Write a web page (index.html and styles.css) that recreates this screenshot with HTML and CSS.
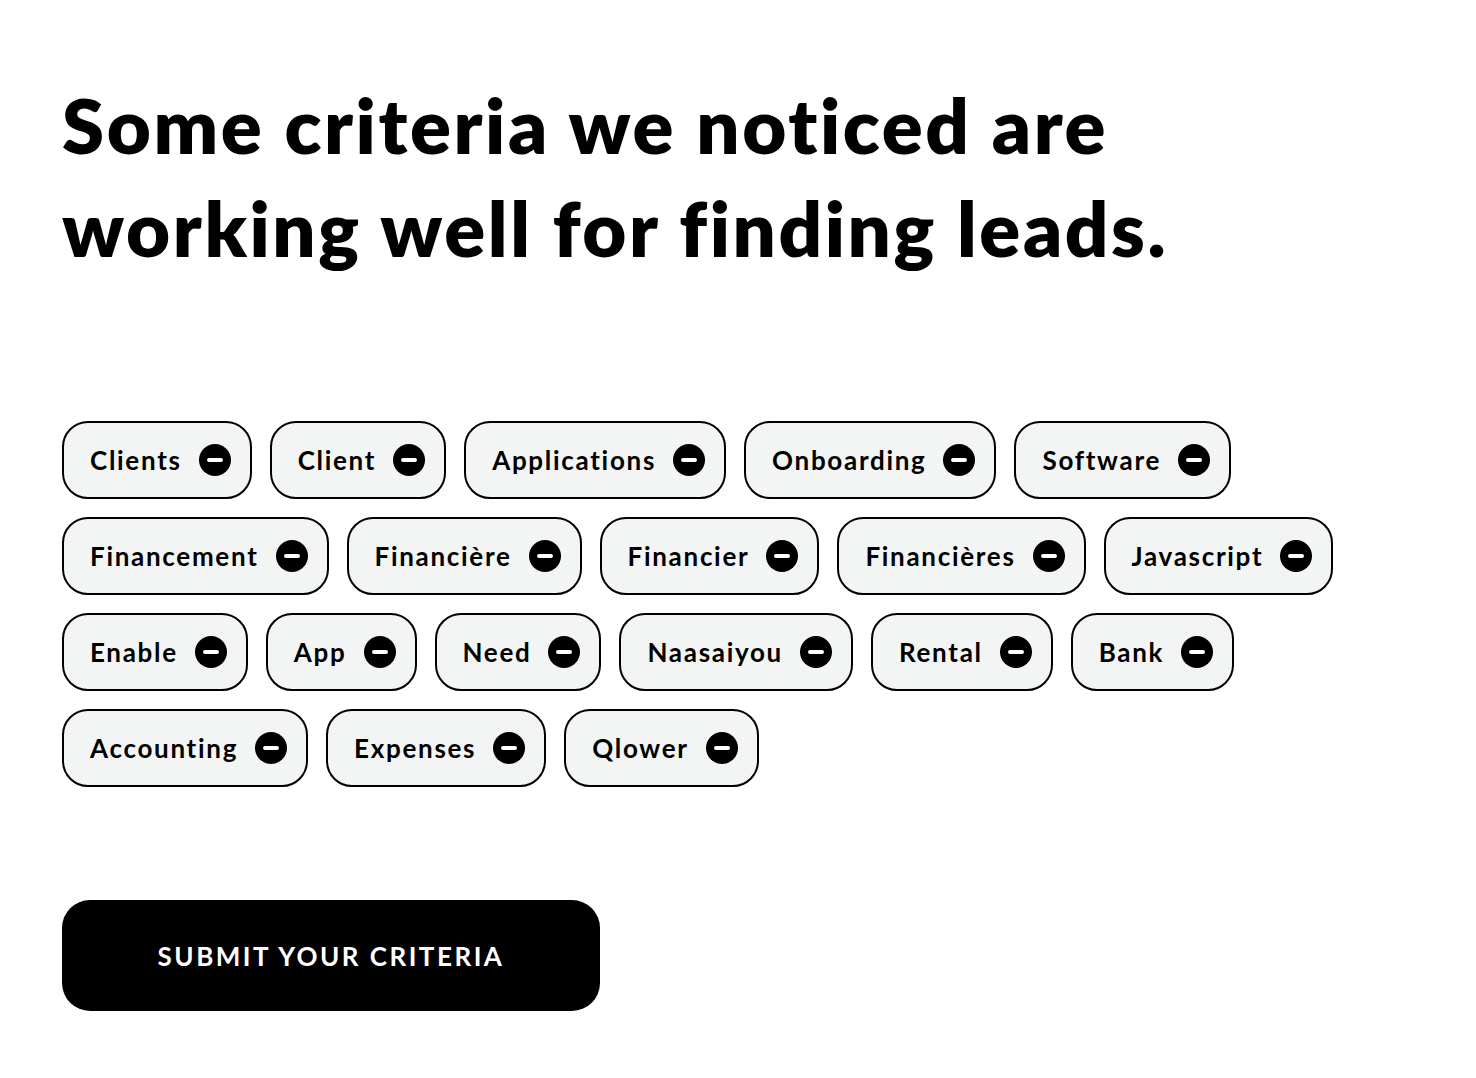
FILE: index.html
```html
<!DOCTYPE html>
<html lang="en">
<head>
<meta charset="utf-8">
<title>Criteria</title>
<link rel="stylesheet" href="styles.css">
</head>
<body>
<main class="page">
  <h1 class="title">Some criteria we noticed are<br>working well for finding leads.</h1>
  <div class="chips">
    <ul class="chip-row">
      <li class="chip"><span class="chip-label">Clients</span><span class="chip-remove"></span></li>
      <li class="chip"><span class="chip-label">Client</span><span class="chip-remove"></span></li>
      <li class="chip"><span class="chip-label">Applications</span><span class="chip-remove"></span></li>
      <li class="chip"><span class="chip-label">Onboarding</span><span class="chip-remove"></span></li>
      <li class="chip"><span class="chip-label">Software</span><span class="chip-remove"></span></li>
    </ul>
    <ul class="chip-row">
      <li class="chip"><span class="chip-label">Financement</span><span class="chip-remove"></span></li>
      <li class="chip"><span class="chip-label">Financière</span><span class="chip-remove"></span></li>
      <li class="chip"><span class="chip-label">Financier</span><span class="chip-remove"></span></li>
      <li class="chip"><span class="chip-label">Financières</span><span class="chip-remove"></span></li>
      <li class="chip"><span class="chip-label">Javascript</span><span class="chip-remove"></span></li>
    </ul>
    <ul class="chip-row">
      <li class="chip"><span class="chip-label">Enable</span><span class="chip-remove"></span></li>
      <li class="chip"><span class="chip-label">App</span><span class="chip-remove"></span></li>
      <li class="chip"><span class="chip-label">Need</span><span class="chip-remove"></span></li>
      <li class="chip"><span class="chip-label">Naasaiyou</span><span class="chip-remove"></span></li>
      <li class="chip"><span class="chip-label">Rental</span><span class="chip-remove"></span></li>
      <li class="chip"><span class="chip-label">Bank</span><span class="chip-remove"></span></li>
    </ul>
    <ul class="chip-row">
      <li class="chip"><span class="chip-label">Accounting</span><span class="chip-remove"></span></li>
      <li class="chip"><span class="chip-label">Expenses</span><span class="chip-remove"></span></li>
      <li class="chip"><span class="chip-label">Qlower</span><span class="chip-remove"></span></li>
    </ul>
  </div>
  <button class="submit" type="button">SUBMIT YOUR CRITERIA</button>
</main>
</body>
</html>
```

FILE: styles.css
```css
* { box-sizing: border-box; }
html, body { margin: 0; padding: 0; background: #fff; }
body { font-family: "Lato", "Liberation Sans", sans-serif; color: #000; }
.page { padding: 73px 62px 0; }
.title {
  margin: 0;
  font-size: 76px;
  line-height: 103px;
  font-weight: 800;
  letter-spacing: 2.6px;
}
.chips {
  margin-top: 142px;
  display: flex;
  flex-direction: column;
  row-gap: 18px;
}
.chip-row {
  list-style: none;
  margin: 0;
  padding: 0;
  display: flex;
  column-gap: 18px;
}
.chip {
  display: flex;
  align-items: center;
  height: 78px;
  padding: 0 19px 0 26px;
  border: 2px solid #000;
  border-radius: 26px;
  background: #f3f5f4;
}
.chip-label {
  font-size: 26px;
  font-weight: 700;
  letter-spacing: 1.7px;
}
.chip-remove {
  position: relative;
  width: 32px;
  height: 32px;
  margin-left: 17px;
  border-radius: 50%;
  background: #000;
}
.chip-remove::after {
  content: "";
  position: absolute;
  left: 8px;
  top: 14px;
  width: 16px;
  height: 4px;
  border-radius: 2px;
  background: #fff;
}
.submit {
  display: block;
  margin-top: 113px;
  width: 538px;
  height: 111px;
  border: 0;
  border-radius: 28px;
  background: #000;
  color: #fff;
  font-family: "Lato", "Liberation Sans", sans-serif;
  font-size: 26px;
  font-weight: 700;
  letter-spacing: 2.5px;
}
```
